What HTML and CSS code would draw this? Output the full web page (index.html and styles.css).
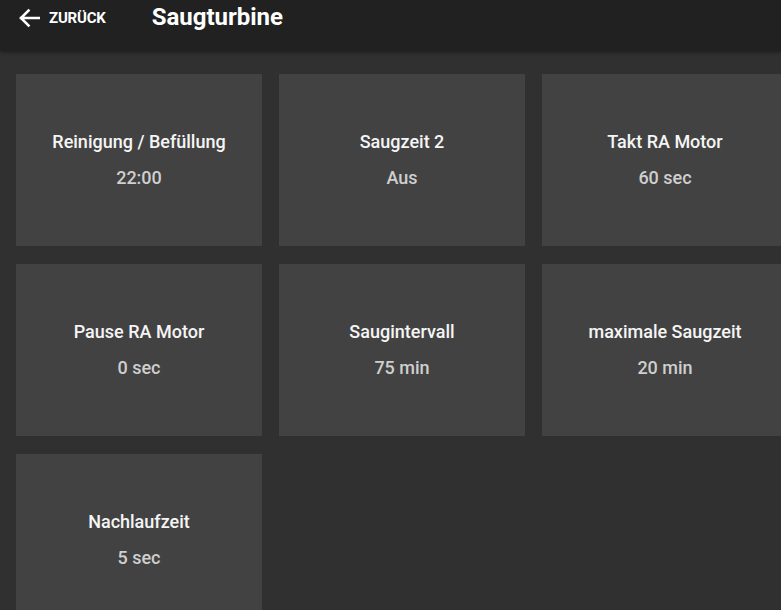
FILE: index.html
```html
<!DOCTYPE html>
<html lang="de">
<head>
<meta charset="utf-8">
<title>Saugturbine</title>
<link rel="stylesheet" href="styles.css">
</head>
<body>
<header class="topbar">
  <a class="back" href="#">
    <svg class="back-icon" width="22" height="20" viewBox="0 0 22 20" aria-hidden="true">
      <path d="M21 10H3M10.5 2.5L3 10l7.5 7.5" fill="none" stroke="#fff" stroke-width="2.6" stroke-linecap="square"/>
    </svg>
    <span class="back-label">ZURÜCK</span>
  </a>
  <h1 class="title">Saugturbine</h1>
</header>
<main class="grid">
  <div class="card"><div class="card-title">Reinigung / Befüllung</div><div class="card-value">22:00</div></div>
  <div class="card"><div class="card-title">Saugzeit 2</div><div class="card-value">Aus</div></div>
  <div class="card"><div class="card-title">Takt RA Motor</div><div class="card-value">60 sec</div></div>
  <div class="card"><div class="card-title">Pause RA Motor</div><div class="card-value">0 sec</div></div>
  <div class="card"><div class="card-title">Saugintervall</div><div class="card-value">75 min</div></div>
  <div class="card"><div class="card-title">maximale Saugzeit</div><div class="card-value">20 min</div></div>
  <div class="card"><div class="card-title">Nachlaufzeit</div><div class="card-value">5 sec</div></div>
</main>
</body>
</html>
```
FILE: styles.css
```css
* { box-sizing: border-box; }
html, body {
  margin: 0;
  padding: 0;
  background: #303030;
  overflow: hidden;
  font-family: Roboto, "Liberation Sans", sans-serif;
  color: #fff;
}
body { width: 781px; height: 610px; }
.topbar {
  height: 51px;
  background: #212121;
  box-shadow: 0 1px 4px rgba(0,0,0,0.45);
  display: flex;
  align-items: flex-start;
  padding: 0 0 0 18px;
  position: relative;
  z-index: 1;
}
.back {
  display: flex;
  align-items: center;
  gap: 9px;
  color: #fff;
  text-decoration: none;
  margin-top: 8px;
  height: 20px;
}
.back-icon { display: block; }
.back-label {
  font-size: 15px;
  font-weight: 700;
  letter-spacing: -0.2px;
  margin-top: -1px;
}
.title {
  margin: 3px 0 0 46px;
  font-size: 24px;
  font-weight: 700;
  line-height: 29px;
}
.grid {
  display: grid;
  grid-template-columns: repeat(3, 246px);
  grid-auto-rows: 172px;
  column-gap: 17px;
  row-gap: 18px;
  padding: 23px 0 0 16px;
  width: 900px;
}
.card {
  background: #424242;
  display: flex;
  flex-direction: column;
  align-items: center;
  justify-content: center;
  gap: 12px;
}
.card-title {
  font-size: 18px;
  font-weight: 500;
  line-height: 24px;
  color: #f5f5f5;
}
.card-value {
  font-size: 18px;
  font-weight: 500;
  line-height: 24px;
  color: #cfcfcf;
}
```
